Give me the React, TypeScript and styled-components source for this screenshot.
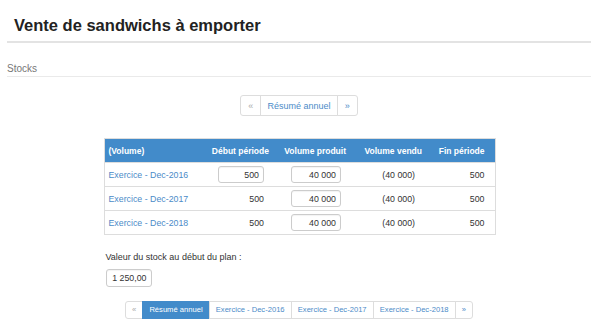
import React from "react";
import styled, { createGlobalStyle } from "styled-components";

const Global = createGlobalStyle`
  html, body { margin: 0; padding: 0; background: #fff; }
  body { font-family: "Liberation Sans", Arial, sans-serif; color: #333; }
  * { box-sizing: border-box; }
`;

const Page = styled.div`
  padding: 0 9px 0 7px;
`;

const TitleBar = styled.div`
  padding: 15px 0 6px 7px;
  border-bottom: 2px solid #e3e3e3;
`;

const Title = styled.h1`
  margin: 0;
  font-size: 16.5px;
  line-height: 20px;
  font-weight: bold;
  color: #222;
`;

const Section = styled.div`
  margin-top: 20px;
  padding-bottom: 1px;
  border-bottom: 1px solid #eaeaea;
  font-size: 10px;
  line-height: 12px;
  color: #777;
`;

const PagerRow = styled.div<{ $top: number }>`
  display: flex;
  justify-content: center;
  margin-top: ${(p) => p.$top}px;
`;

const Pager = styled.ul`
  display: flex;
  list-style: none;
  margin: 0;
  padding: 0;
`;

const PageItem = styled.li<{ $h: number; $fs: number; $px: number; $active?: boolean; $muted?: boolean }>`
  height: ${(p) => p.$h}px;
  padding: 0 ${(p) => p.$px}px;
  display: flex;
  align-items: center;
  font-size: ${(p) => p.$fs}px;
  border: 1px solid ${(p) => (p.$active ? "#428bca" : "#ddd")};
  margin-left: -1px;
  background: ${(p) => (p.$active ? "#428bca" : "#fff")};
  color: ${(p) => (p.$active ? "#fff" : p.$muted ? "#aaa" : "#4b8bc8")};
  white-space: nowrap;
  &:first-child { margin-left: 0; border-radius: 3px 0 0 3px; }
  &:last-child { border-radius: 0 3px 3px 0; }
`;

const Block = styled.div`
  width: 391px;
  margin: 22px auto 0;
`;

const Table = styled.table`
  width: 391px;
  table-layout: fixed;
  border-collapse: collapse;
  border: 1px solid #ddd;
`;

const HeadCell = styled.th<{ $pr: number; $left?: boolean }>`
  background: #428bca;
  color: #fff;
  font-size: 8.5px;
  font-weight: bold;
  height: 24px;
  padding: 0 ${(p) => p.$pr}px 0 4px;
  text-align: ${(p) => (p.$left ? "left" : "right")};
  white-space: nowrap;
`;

const Cell = styled.td<{ $pr: number; $left?: boolean }>`
  font-size: 8.8px;
  height: 24px;
  padding: 0 ${(p) => p.$pr}px 0 4px;
  text-align: ${(p) => (p.$left ? "left" : "right")};
  border-top: 1px solid #ddd;
  white-space: nowrap;
  color: #333;
`;

const Link = styled.span`
  color: #4b8bc8;
`;

const NumInput = styled.div<{ $w: number; $h: number; $fs: number }>`
  display: inline-flex;
  align-items: center;
  justify-content: flex-end;
  width: ${(p) => p.$w}px;
  height: ${(p) => p.$h}px;
  padding-right: 4px;
  border: 1px solid #ccc;
  border-radius: 3px;
  font-size: ${(p) => p.$fs}px;
  color: #333;
  background: #fff;
  box-shadow: inset 0 1px 1px rgba(0, 0, 0, 0.05);
  vertical-align: middle;
`;

const StockValue = styled.div`
  margin-top: 17px;
  padding-left: 2px;
`;

const Label = styled.div`
  font-size: 9px;
  line-height: 11px;
  color: #333;
  margin-bottom: 5px;
`;

const cols = [96, 77, 77, 76, 65];

const years = ["2016", "2017", "2018"];

export default function App() {
  return (
    <>
      <Global />
      <Page>
        <TitleBar>
          <Title>Vente de sandwichs à emporter</Title>
        </TitleBar>
        <Section>Stocks</Section>
        <PagerRow $top={18}>
          <Pager>
            <PageItem $h={21} $fs={9} $px={7} $muted>«</PageItem>
            <PageItem $h={21} $fs={9} $px={6.3}>Résumé annuel</PageItem>
            <PageItem $h={21} $fs={9} $px={7}>»</PageItem>
          </Pager>
        </PagerRow>
        <Block>
          <Table>
            <colgroup>
              {cols.map((w, i) => (
                <col key={i} style={{ width: w }} />
              ))}
            </colgroup>
            <thead>
              <tr>
                <HeadCell $pr={8} $left>(Volume)</HeadCell>
                <HeadCell $pr={8}>Début période</HeadCell>
                <HeadCell $pr={8}>Volume produit</HeadCell>
                <HeadCell $pr={8}>Volume vendu</HeadCell>
                <HeadCell $pr={10}>Fin période</HeadCell>
              </tr>
            </thead>
            <tbody>
              {years.map((y, i) => (
                <tr key={y}>
                  <Cell $pr={4} $left>
                    <Link>Exercice - Dec-{y}</Link>
                  </Cell>
                  <Cell $pr={13}>
                    {i === 0 ? (
                      <NumInput $w={46} $h={17} $fs={8.8}>500</NumInput>
                    ) : (
                      "500"
                    )}
                  </Cell>
                  <Cell $pr={13}>
                    <NumInput $w={50} $h={17} $fs={8.8}>40 000</NumInput>
                  </Cell>
                  <Cell $pr={15}>(40 000)</Cell>
                  <Cell $pr={10}>500</Cell>
                </tr>
              ))}
            </tbody>
          </Table>
          <StockValue>
            <Label>Valeur du stock au début du plan :</Label>
            <NumInput $w={46} $h={18} $fs={8.8}>1 250,00</NumInput>
          </StockValue>
        </Block>
        <PagerRow $top={14}>
          <Pager>
            <PageItem $h={18} $fs={7.6} $px={6.1} $muted>«</PageItem>
            <PageItem $h={18} $fs={7.6} $px={6.1} $active>Résumé annuel</PageItem>
            {years.map((y) => (
              <PageItem key={y} $h={18} $fs={7.6} $px={6.1}>
                Exercice - Dec-{y}
              </PageItem>
            ))}
            <PageItem $h={18} $fs={7.6} $px={6.1}>»</PageItem>
          </Pager>
        </PagerRow>
      </Page>
    </>
  );
}
